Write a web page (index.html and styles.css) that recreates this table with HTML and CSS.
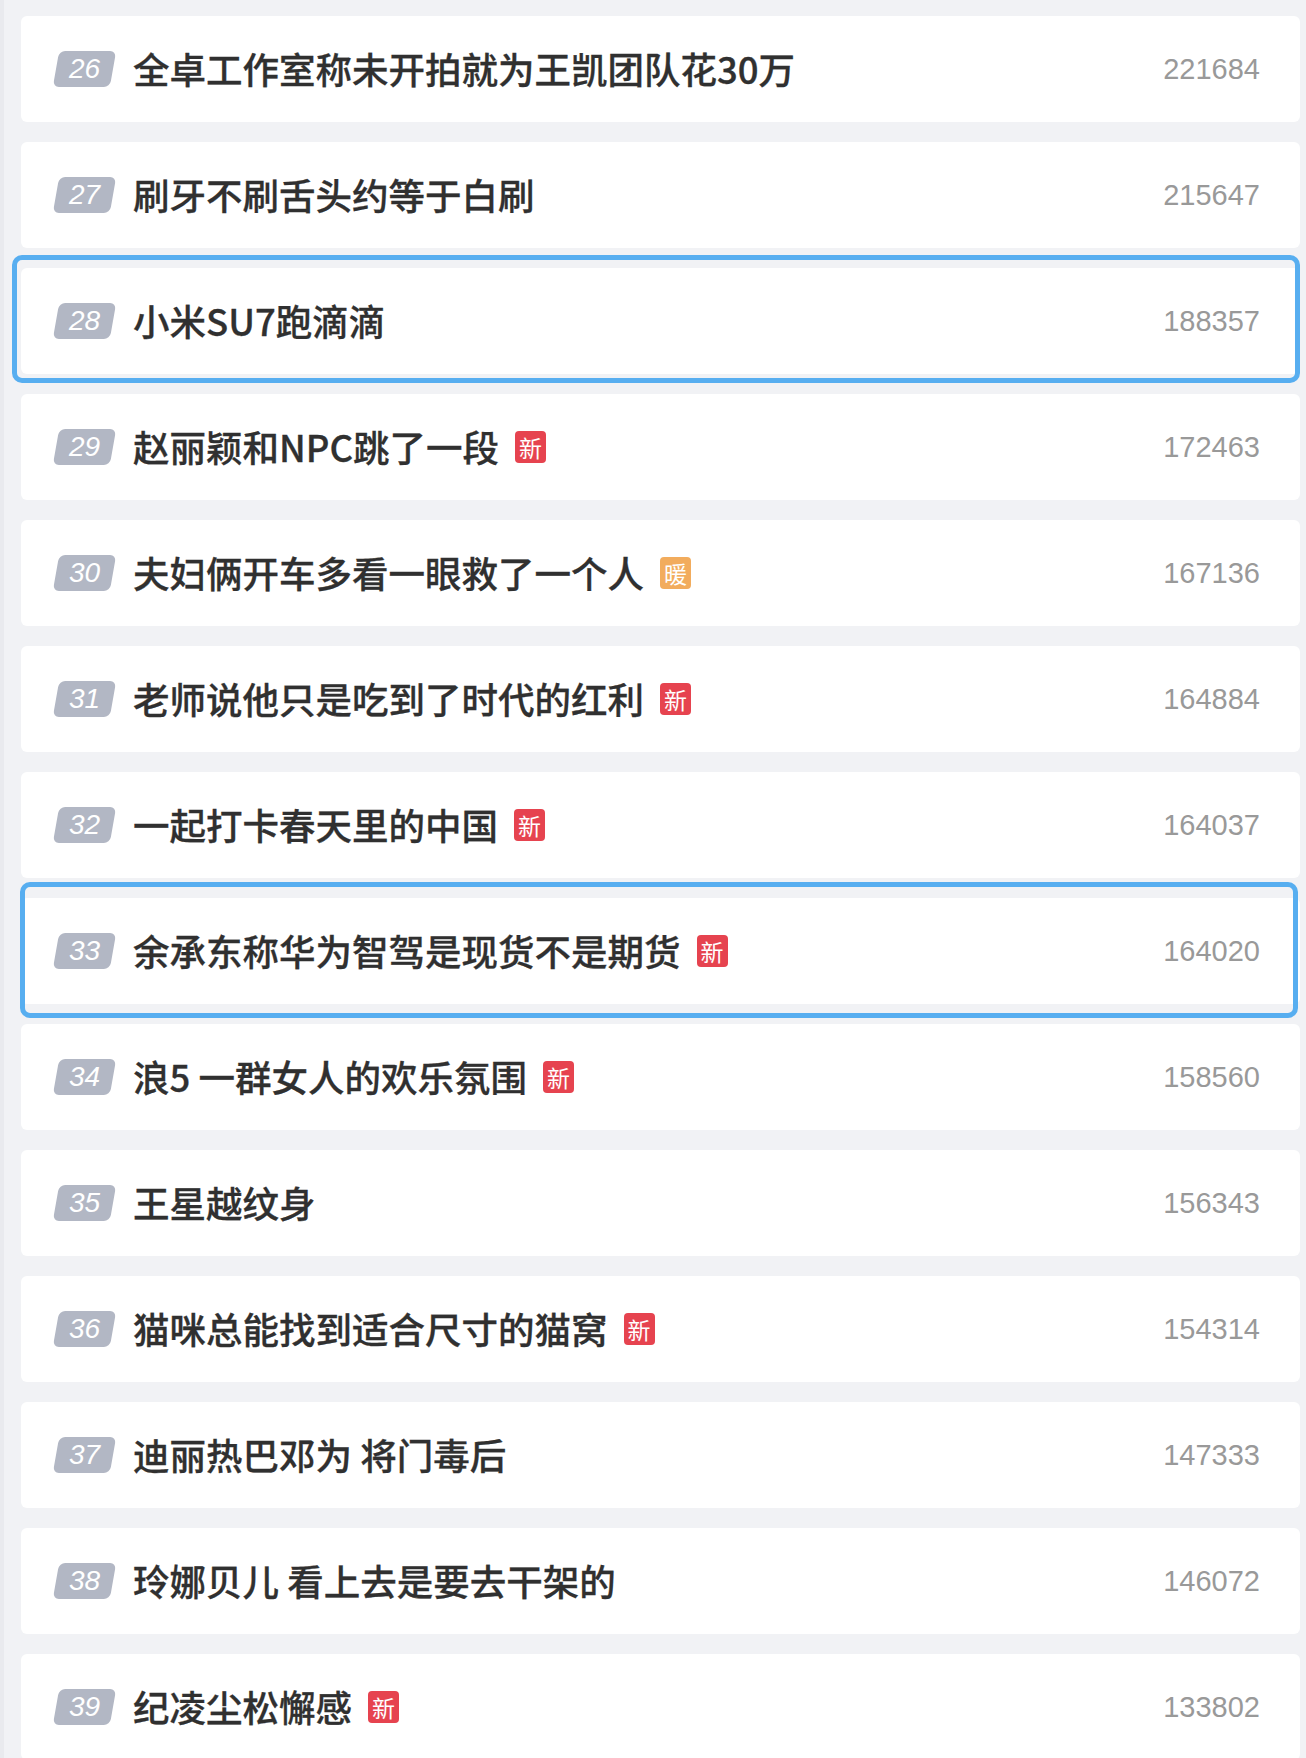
FILE: index.html
```html
<!DOCTYPE html>
<html lang="zh-CN">
<head>
<meta charset="utf-8">
<title>热搜榜</title>
<link rel="stylesheet" href="styles.css">
</head>
<body>
<div class="page">
  <ul class="list">
    <li class="item"><span class="rank"><span class="rank-num">26</span></span><span class="title">全卓工作室称未开拍就为王凯团队花30万</span><span class="count">221684</span></li>
    <li class="item"><span class="rank"><span class="rank-num">27</span></span><span class="title">刷牙不刷舌头约等于白刷</span><span class="count">215647</span></li>
    <li class="item"><span class="rank"><span class="rank-num">28</span></span><span class="title">小米SU7跑滴滴</span><span class="count">188357</span><span class="focus focus-a"></span></li>
    <li class="item"><span class="rank"><span class="rank-num">29</span></span><span class="title">赵丽颖和NPC跳了一段</span><span class="tag tag-new">新</span><span class="count">172463</span></li>
    <li class="item"><span class="rank"><span class="rank-num">30</span></span><span class="title">夫妇俩开车多看一眼救了一个人</span><span class="tag tag-warm">暖</span><span class="count">167136</span></li>
    <li class="item"><span class="rank"><span class="rank-num">31</span></span><span class="title">老师说他只是吃到了时代的红利</span><span class="tag tag-new">新</span><span class="count">164884</span></li>
    <li class="item"><span class="rank"><span class="rank-num">32</span></span><span class="title">一起打卡春天里的中国</span><span class="tag tag-new">新</span><span class="count">164037</span></li>
    <li class="item"><span class="rank"><span class="rank-num">33</span></span><span class="title">余承东称华为智驾是现货不是期货</span><span class="tag tag-new">新</span><span class="count">164020</span><span class="focus focus-b"></span></li>
    <li class="item"><span class="rank"><span class="rank-num">34</span></span><span class="title">浪5 一群女人的欢乐氛围</span><span class="tag tag-new">新</span><span class="count">158560</span></li>
    <li class="item"><span class="rank"><span class="rank-num">35</span></span><span class="title">王星越纹身</span><span class="count">156343</span></li>
    <li class="item"><span class="rank"><span class="rank-num">36</span></span><span class="title">猫咪总能找到适合尺寸的猫窝</span><span class="tag tag-new">新</span><span class="count">154314</span></li>
    <li class="item"><span class="rank"><span class="rank-num">37</span></span><span class="title">迪丽热巴邓为 将门毒后</span><span class="count">147333</span></li>
    <li class="item"><span class="rank"><span class="rank-num">38</span></span><span class="title">玲娜贝儿 看上去是要去干架的</span><span class="count">146072</span></li>
    <li class="item"><span class="rank"><span class="rank-num">39</span></span><span class="title">纪凌尘松懈感</span><span class="tag tag-new">新</span><span class="count">133802</span></li>
  </ul>
</div>
</body>
</html>
```
FILE: styles.css
```css
html, body {
  margin: 0;
  padding: 0;
  background: #f1f2f5;
}
body {
  font-family: "Noto Sans CJK SC", "Liberation Sans", sans-serif;
  height: 1758px;
  overflow: hidden;
}
.page {
  border-left: 4px solid #e9eaee;
  padding: 16px 6px 0 17px;
}
.list {
  list-style: none;
  margin: 0;
  padding: 0;
  display: flex;
  flex-direction: column;
  gap: 20px;
}
.item {
  position: relative;
  height: 106px;
  background: #ffffff;
  border-radius: 6px;
  display: flex;
  align-items: center;
  padding: 0 40px 0 35px;
}
.rank {
  flex: none;
  width: 57px;
  height: 36px;
  background: #b2b7c4;
  border-radius: 6px;
  transform: skewX(-10deg);
  display: flex;
  align-items: center;
  justify-content: center;
}
.rank-num {
  transform: skewX(10deg);
  font-family: "Liberation Sans", "DejaVu Sans", sans-serif;
  font-style: italic;
  font-size: 28px;
  color: #ffffff;
  line-height: 1;
}
.title {
  margin-left: 20px;
  font-size: 36.5px;
  font-weight: 500;
  color: #303030;
  white-space: nowrap;
  line-height: 1;
  -webkit-text-stroke: 0.3px #303030;
}
.tag {
  flex: none;
  margin-left: 16px;
  width: 31px;
  height: 32px;
  border-radius: 4px;
  color: #ffffff;
  font-size: 23px;
  line-height: 32px;
  text-align: center;
}
.tag-new {
  background: #e6434f;
}
.tag-warm {
  background: #f2ac5d;
}
.count {
  margin-left: auto;
  font-family: "Liberation Sans", "DejaVu Sans", sans-serif;
  font-size: 29px;
  color: #999999;
  line-height: 1;
}
.focus {
  position: absolute;
  border: 5px solid #57aef0;
  border-radius: 10px;
  pointer-events: none;
}
.focus-a {
  left: -9px;
  top: -13px;
  right: 0;
  bottom: -9px;
}
.focus-b {
  left: -1px;
  top: -16px;
  right: 2px;
  bottom: -14px;
}
```
